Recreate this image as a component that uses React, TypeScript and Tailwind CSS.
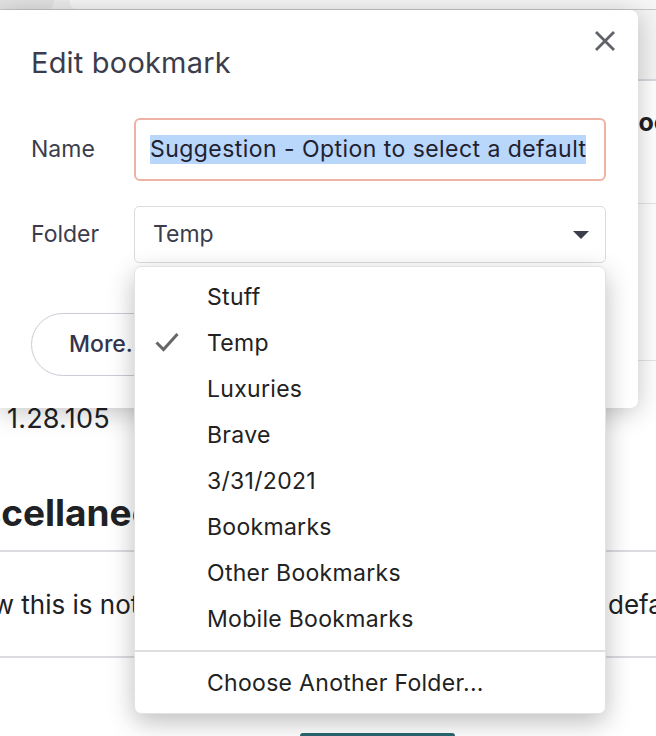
const folders = ['Stuff', 'Temp', 'Luxuries', 'Brave', '3/31/2021', 'Bookmarks', 'Other Bookmarks', 'Mobile Bookmarks'];
const selectedFolder = 'Temp';

// settings page sitting behind the dialog
function SettingsBackdrop() {
  return (
    <div className="flex flex-col w-[656px] h-[736px] bg-white text-[#202124]">
      <div className="flex h-[10px] bg-[#ececec] border-b border-[#c6c6c6]">
        <div className="w-[54px] h-[9px] bg-[#e2e2e2] rounded-br-md" />
        <div className="ml-[16px] flex-1 h-[9px] bg-[#f6f6f6] rounded-bl-md" />
      </div>
      <div className="h-[71px] bg-[#f4f4f4] border-b-2 border-[#d5d9dd]" />
      <div className="h-[123px] flex items-start pt-[26px] pl-[622px] border-b border-[#e3e5e8] overflow-hidden">
        <span className="text-[25px] font-bold whitespace-nowrap leading-[30px]">Bookmarks</span>
      </div>
      <div className="h-[157px] border-b border-[#e3e5e8]" />
      <div className="mt-[42px] pl-[7px] text-[27px] leading-[32px] tracking-[0.2px]">1.28.105</div>
      <div className="mt-[57px] -ml-[64px] text-[37px] font-bold leading-[42px] whitespace-nowrap">Miscellaneous</div>
      <div className="mt-[16px] h-[2px] bg-[#dadce0]" />
      <div className="grid grid-cols-[650px_auto] items-center h-[104px] whitespace-nowrap text-[26px] -ml-[42px]">
        <span>Now this is not</span>
        <span>default</span>
      </div>
      <div className="h-[2px] bg-[#dadce0]" />
      <div className="flex-1 flex items-end pl-[300px]">
        <div className="w-[155px] h-[3px] bg-[#2a6670] rounded-t-full" />
      </div>
    </div>
  );
}

export default function App() {
  return (
    <div className="relative w-[656px] h-[736px] overflow-hidden" style={{ fontFamily: 'Inter, "Noto Sans", sans-serif' }}>
      <SettingsBackdrop />

      {/* Edit bookmark dialog */}
      <div className="absolute left-0 top-[10px] w-[638px] h-[398px] bg-white rounded-r-lg shadow-[0_4px_26px_rgba(0,0,0,0.24)] pl-[31px] pr-[32px]">
        <div className="flex items-start justify-between pt-[13px]">
          <h2 className="mt-[23px] text-[29px] leading-[34px] text-[#3b3d4c] tracking-[0.2px]">Edit bookmark</h2>
          <svg width="36" height="36" viewBox="0 0 36 36" className="-mr-[17px]">
            <path d="M9 9 L27 27 M27 9 L9 27" stroke="#5f6368" strokeWidth="2.8" />
          </svg>
        </div>

        <div className="grid grid-cols-[103px_1fr] items-center mt-[38px]">
          <span className="text-[23px] text-[#3b3d4c]">Name</span>
          <div className="h-[63px] flex items-center border-2 border-[#efb3a5] rounded-[6px] pl-[14px] overflow-hidden">
            <span className="bg-[#b9d6fb] text-[23px] leading-[29px] tracking-[0.45px] text-[#1f2130] whitespace-nowrap">
              Suggestion - Option to select a default
            </span>
          </div>
        </div>

        <div className="grid grid-cols-[103px_1fr] items-center mt-[25px]">
          <span className="text-[23px] text-[#3b3d4c]">Folder</span>
          <div className="h-[57px] flex items-center justify-between border border-[#dcdcdc] rounded-[5px] pl-[18px] pr-[16px]">
            <span className="text-[23px] text-[#3b3d4c]">{selectedFolder}</span>
            <svg width="16" height="8" viewBox="0 0 16 8">
              <path d="M0 0 H16 L8 8 Z" fill="#3b3d4c" />
            </svg>
          </div>
        </div>

        <div className="mt-[50px] w-[200px] h-[63px] flex items-center border border-[#cbcbd8] rounded-full pl-[37px]">
          <span className="text-[23px] font-medium text-[#33354b]">More...</span>
        </div>
      </div>

      {/* open folder menu */}
      <div className="absolute left-[134px] top-[266px] w-[472px] h-[448px] bg-white rounded-[7px] border border-[#e2e2e2] shadow-[0_8px_26px_rgba(0,0,0,0.26)] pt-[7px] text-[23px] tracking-[0.3px] text-[#222222]">
        {folders.map((f) => (
          <div key={f} className="flex items-center h-[46px]">
            <div className="w-[72px] flex justify-start pl-[20px]">
              {f === selectedFolder && (
                <svg width="24" height="20" viewBox="0 0 24 20" className="-mt-[3px]">
                  <path d="M1.5 10.5 L8.5 17.5 L22.5 2" fill="none" stroke="#666666" strokeWidth="3" />
                </svg>
              )}
            </div>
            <span>{f}</span>
          </div>
        ))}
        <div className="my-[8px] h-[2px] bg-[#dedede]" />
        <div className="h-[46px] flex items-center pl-[72px]">Choose Another Folder...</div>
      </div>
    </div>
  );
}
